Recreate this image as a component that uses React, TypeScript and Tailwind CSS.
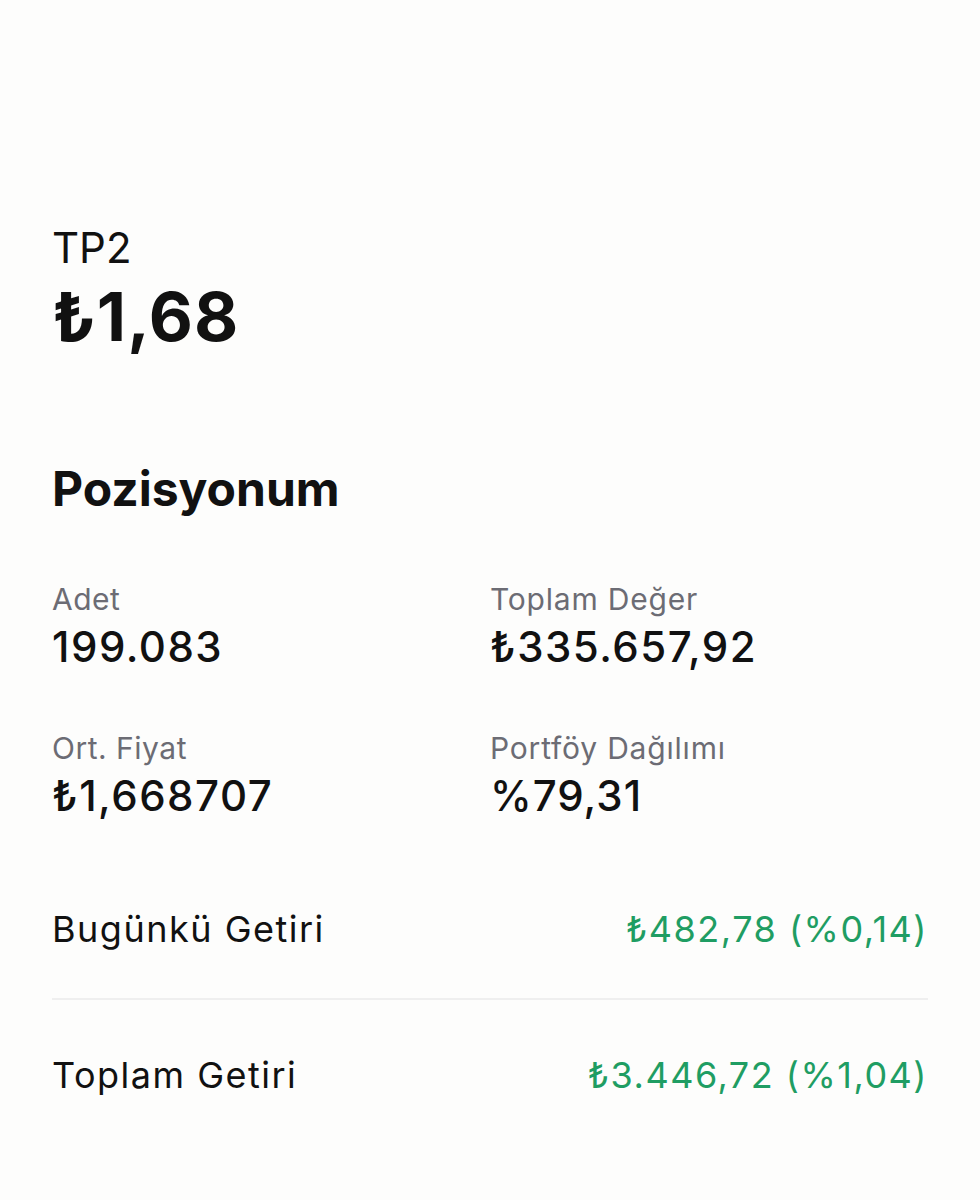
export default function App() {
  const font = { fontFamily: "Inter, 'Noto Sans', sans-serif" };
  return (
    <div
      className="min-h-[1200px] w-full bg-[#fdfdfc] pl-[52px] pr-[52px] pt-[223px] text-[#111111]"
      style={font}
    >
      {/* header */}
      <div className="text-[42px] leading-[50px] font-normal">TP2</div>
      <div className="mt-[7px] text-[68px] leading-[72px] font-bold tracking-[1px]">₺1,68</div>

      {/* position */}
      <h2 className="mt-[107px] text-[48px] leading-[60px] font-bold">Pozisyonum</h2>

      <div className="mt-[62px] grid grid-cols-2">
        <div>
          <div className="text-[30px] leading-[36px] tracking-[0.5px] text-[#6c6c74]">Adet</div>
          <div className="mt-[7px] text-[42px] leading-[46px] font-medium tracking-[1.5px]">199.083</div>
        </div>
        <div>
          <div className="text-[30px] leading-[36px] tracking-[0.8px] text-[#6c6c74]">Toplam Değer</div>
          <div className="mt-[7px] text-[42px] leading-[46px] font-medium tracking-[1.5px]">₺335.657,92</div>
        </div>
        <div className="mt-[60px]">
          <div className="text-[30px] leading-[36px] tracking-[0.5px] text-[#6c6c74]">Ort. Fiyat</div>
          <div className="mt-[7px] text-[42px] leading-[46px] font-medium tracking-[1.5px]">₺1,668707</div>
        </div>
        <div className="mt-[60px]">
          <div className="text-[30px] leading-[36px] tracking-[0.8px] text-[#6c6c74]">Portföy Dağılımı</div>
          <div className="mt-[7px] text-[42px] leading-[46px] font-medium tracking-[1px]">%79,31</div>
        </div>
      </div>

      <div className="mt-[90px] flex items-center justify-between pb-[49px] text-[36px] leading-[40px] tracking-[1.5px]">
        <span>Bugünkü Getiri</span>
        <span className="text-[#1f9d63]">₺482,78 (%0,14)</span>
      </div>
      <div className="h-[2px] bg-[#efefef]" />
      <div className="flex items-center justify-between pt-[55px] text-[36px] leading-[40px] tracking-[1.5px]">
        <span>Toplam Getiri</span>
        <span className="text-[#1f9d63]">₺3.446,72 (%1,04)</span>
      </div>
    </div>
  );
}
